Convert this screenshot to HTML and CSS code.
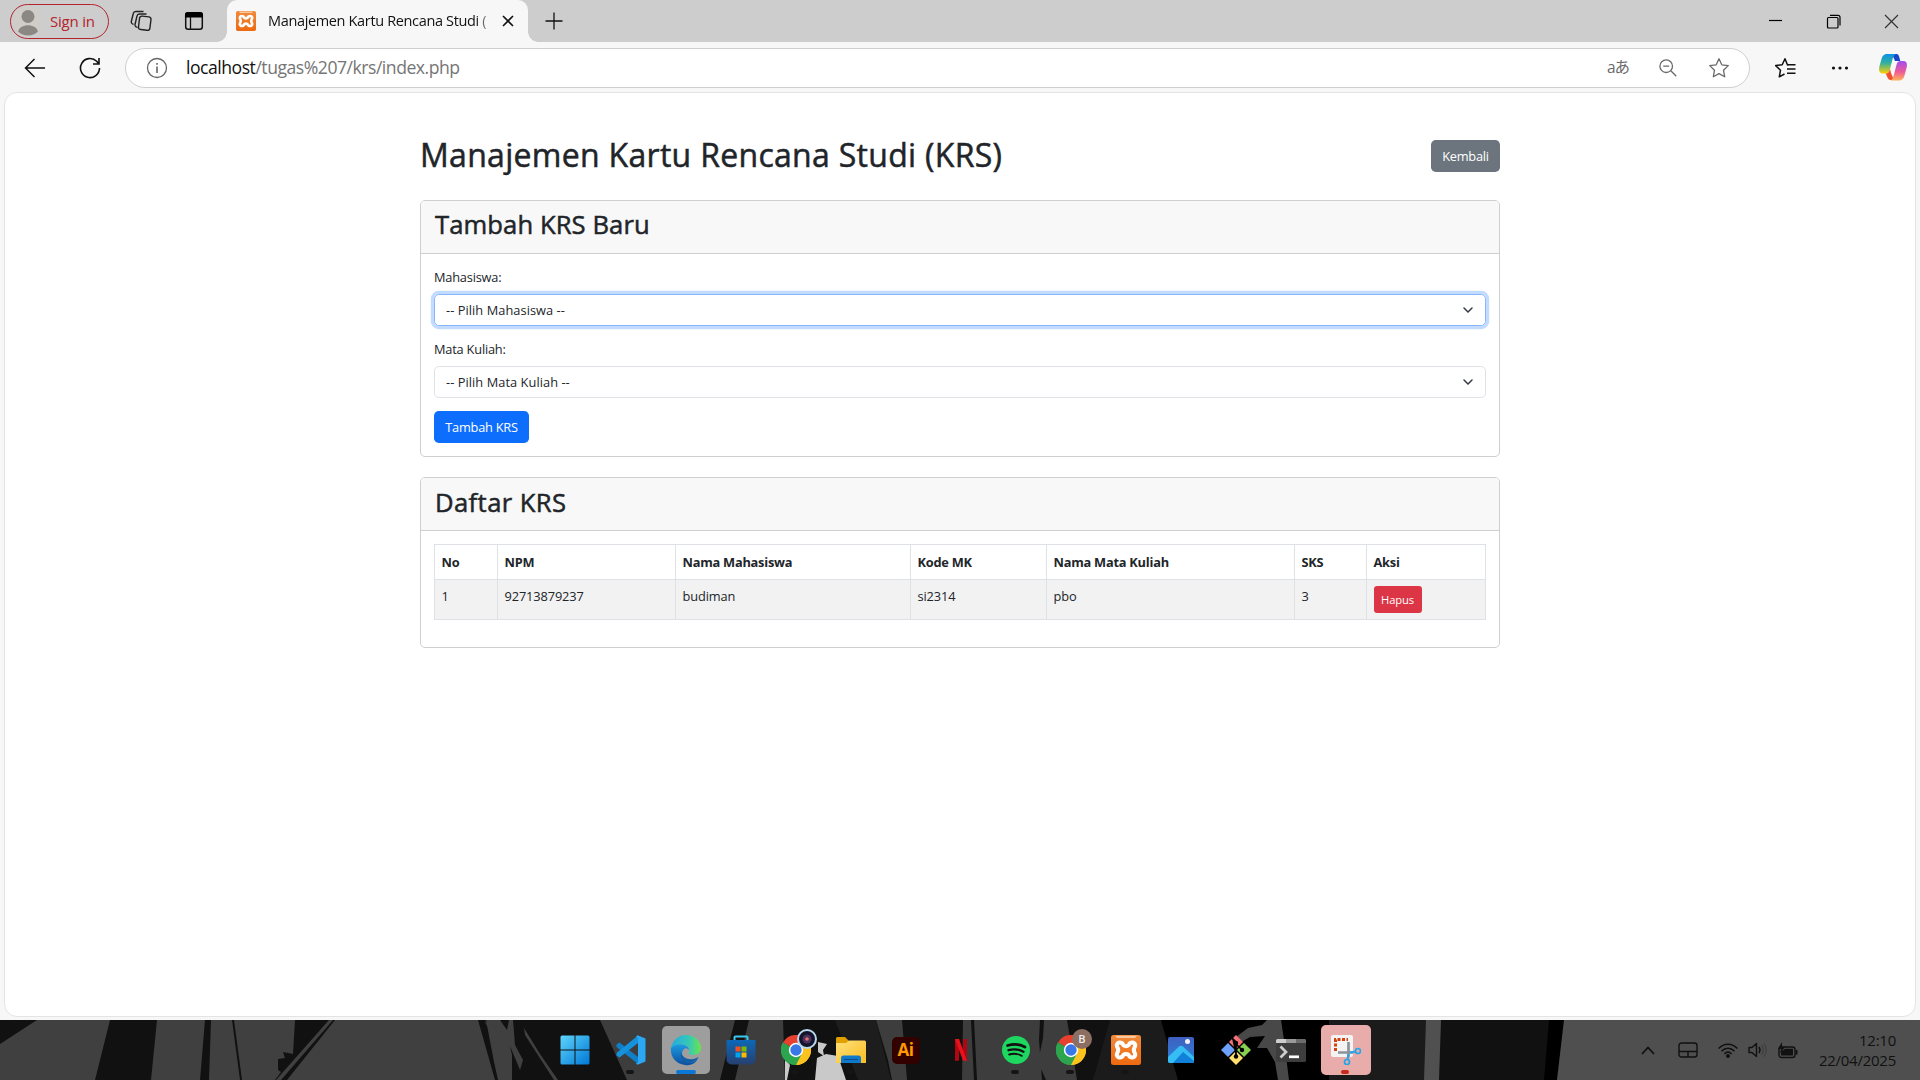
FILE: index.html
```html
<!DOCTYPE html>
<html lang="id">
<head>
<meta charset="utf-8">
<title>Manajemen Kartu Rencana Studi (KRS)</title>
<link rel="stylesheet" href="styles.css">
</head>
<body>
<svg width="0" height="0" class="defs">
  <defs>
    <linearGradient id="blue" x1="0" y1="0" x2="1" y2="1"><stop offset="0" stop-color="#5fd4fb"/><stop offset="1" stop-color="#0078d6"/></linearGradient>
    <linearGradient id="orange" x1="0" y1="0" x2="0" y2="1"><stop offset="0" stop-color="#f08a3c"/><stop offset="1" stop-color="#ee6a10"/></linearGradient>
    <linearGradient id="edgeA" x1="0" y1="0" x2="1" y2="0"><stop offset="0" stop-color="#27a9e1"/><stop offset=".6" stop-color="#35c9b5"/><stop offset="1" stop-color="#6be34c"/></linearGradient>
    <linearGradient id="edgeB" x1="0" y1="0" x2="0" y2="1"><stop offset="0" stop-color="#1c9be0"/><stop offset="1" stop-color="#0d4f9f"/></linearGradient>
    <linearGradient id="store" x1="0" y1="0" x2="0" y2="1"><stop offset="0" stop-color="#0c68b8"/><stop offset="1" stop-color="#27406f"/></linearGradient>
    <linearGradient id="folder" x1="0" y1="0" x2="1" y2="1"><stop offset="0" stop-color="#ffe07a"/><stop offset="1" stop-color="#fbbd22"/></linearGradient>
    <linearGradient id="photo" x1="0" y1="0" x2="0" y2="1"><stop offset="0" stop-color="#3f5fc0"/><stop offset="1" stop-color="#2a83d8"/></linearGradient>
    <linearGradient id="copA" x1="0" y1="0" x2="0" y2="1"><stop offset="0" stop-color="#0d8fe8"/><stop offset=".45" stop-color="#2fb0a0"/><stop offset="1" stop-color="#ffd000"/></linearGradient>
    <linearGradient id="copB" x1="0" y1="0" x2="0" y2="1"><stop offset="0" stop-color="#a04df0"/><stop offset=".55" stop-color="#ee5a98"/><stop offset="1" stop-color="#ffb259"/></linearGradient>
    <symbol id="chrome" viewBox="0 0 30 30">
      <path d="M15 15 2 7.500A15 15 0 0 1 28 7.500Z" fill="#e8402f"/>
      <path d="M15 15 28 7.500A15 15 0 0 1 15 30Z" fill="#fcc31e"/>
      <path d="M15 15V30A15 15 0 0 1 2 7.500Z" fill="#2da44e"/>
      <path d="M15 8H28.300A15 15 0 0 1 15 30L21 18.500Z" fill="#fcc31e"/>
      <path d="M15 30 21 18.500 9 18.500 2 7.500A15 15 0 0 0 15 30Z" fill="#2da44e"/>
      <circle cx="15" cy="15" r="7.200" fill="#fff"/><circle cx="15" cy="15" r="5.700" fill="#3b78e7"/>
    </symbol>
    <symbol id="xampp" viewBox="0 0 30 30">
      <rect width="30" height="30" rx="2.500" fill="url(#orange)"/>
      <path d="M4 .8H26L24 3H6Z" fill="#fbc79c"/>
      <path d="M11.500 8.500C7.500 6 4.500 9 6.500 12.500 7.500 14.200 7.500 15.800 6.500 17.500 4.500 21 7.500 24 11.500 21.500 12.500 18 17.500 18 18.500 21.500 22.500 24 25.500 21 23.500 17.500 22.500 15.800 22.500 14.200 23.500 12.500 25.500 9 22.500 6 18.500 8.500 17.500 12 12.500 12 11.500 8.500Z" fill="none" stroke="#fff" stroke-width="4" stroke-linejoin="round"/>
    </symbol>
  </defs>
</svg>

<header class="tabs">
  <div class="signin">
    <svg width="30" height="30" viewBox="0 0 30 30"><circle cx="15" cy="15" r="14.500" fill="#d0cdc8"/><circle cx="15" cy="10.500" r="6.500" fill="#8b8782"/><path d="M5 25.500C7 17 23 17 25 25.500A14.500 14.500 0 0 1 5 25.500Z" fill="#8b8782"/></svg>
    <span class="signin-text">Sign in</span>
  </div>
  <svg class="workspaces" width="22" height="22" viewBox="0 0 22 22" fill="none" stroke="#222" stroke-width="1.400"><rect x="9" y="6.500" width="11.500" height="13.500" rx="2.500" transform="rotate(7 15 13)"/><path d="M7.500 17.500 5.800 16.600A2 2 0 0 1 5 14.500L7 6A2.500 2.500 0 0 1 9.500 4H16.500"/><path d="M3.500 14.500 2 13.500A2 2 0 0 1 1.300 11.500L3.300 3.500A2.500 2.500 0 0 1 5.700 1.500H13.500"/></svg>
  <svg class="vtabs" width="20" height="20" viewBox="0 0 20 20"><rect x="1.700" y="1.700" width="16.600" height="16.600" rx="2.500" fill="none" stroke="#111" stroke-width="1.500"/><path d="M1 6.500V4A3 3 0 0 1 4 1H16A3 3 0 0 1 19 4V6.500Z" fill="#000"/><path d="M6.500 6V18" stroke="#111" stroke-width="1.300"/></svg>
  <div class="tab">
    <svg width="20" height="20"><use href="#xampp"/></svg>
    <span class="tab-title">Manajemen Kartu Rencana Studi (</span>
    <svg class="tab-close" width="12" height="12" viewBox="0 0 12 12" stroke="#111" stroke-width="1.600"><path d="M1 1 11 11M11 1 1 11"/></svg>
  </div>
  <svg class="plus" width="18" height="18" viewBox="0 0 18 18" stroke="#111" stroke-width="1.300"><path d="M9 .5V17.500M.5 9H17.500"/></svg>
  <div class="window-buttons">
    <svg width="15" height="15" viewBox="0 0 15 15" stroke="#000" stroke-width="1.200"><path d="M1 6.500H14"/></svg>
    <svg width="15" height="15" viewBox="0 0 15 15" fill="none" stroke="#000" stroke-width="1.200"><rect x="1.500" y="3.500" width="10.500" height="10.500" rx="1"/><path d="M4 1.300H12A2 2 0 0 1 14 3.300V11.500"/></svg>
    <svg width="15" height="15" viewBox="0 0 15 15" stroke="#333" stroke-width="1.200"><path d="M1 1 14 14M14 1 1 14"/></svg>
  </div>
</header>

<nav class="toolbar">
  <svg class="back" width="22" height="20" viewBox="0 0 22 20" fill="none" stroke="#111" stroke-width="1.500"><path d="M21 10H1.500M10.500 1 1.500 10 10.500 19"/></svg>
  <svg class="reload" width="22" height="22" viewBox="0 0 22 22" fill="none" stroke="#111" stroke-width="1.600"><path d="M20.500 11A9.500 9.500 0 1 1 17.700 4.300L19.500 6.500M20 1V7H14"/></svg>
  <div class="address">
    <svg width="22" height="22" viewBox="0 0 22 22" fill="none" stroke="#666" stroke-width="1.300"><circle cx="11" cy="11" r="9.500"/><path d="M11 9.500V16M11 6V7.700" stroke-width="1.600"/></svg>
    <span class="url"><b>localhost</b>/tugas%207/krs/index.php</span>
    <span class="translate">aあ</span>
    <svg class="zoom-icon" width="18" height="18" viewBox="0 0 18 18" fill="none" stroke="#6a6a6a" stroke-width="1.300"><circle cx="7.200" cy="7.200" r="6.300"/><path d="M4.200 7.200H10.200M11.800 11.800 17.300 17.300"/></svg>
    <svg class="star" width="22" height="22" viewBox="0 0 22 22" fill="none" stroke="#6a6a6a" stroke-width="1.300" stroke-linejoin="round"><path d="M11 1.800 13.800 7.800 20.300 8.600 15.500 13.200 16.700 19.800 11 16.600 5.300 19.800 6.500 13.200 1.700 8.600 8.200 7.800Z"/></svg>
  </div>
  <svg class="favorites" width="22" height="22" viewBox="0 0 22 22" fill="none" stroke="#111" stroke-width="1.500" stroke-linejoin="round"><path d="M14.500 8H13.500L11 1.800 8.200 7.800 1.700 8.600 6.500 13.200 5.300 19.800 10.500 17M14 7.800H21.500M13 12H21.500M13 16.200H21.500"/></svg>
  <svg class="dots" width="18" height="6" viewBox="0 0 18 6" fill="#111"><circle cx="2.500" cy="3" r="1.600"/><circle cx="9" cy="3" r="1.600"/><circle cx="15.500" cy="3" r="1.600"/></svg>
  <svg class="copilot" width="28" height="27" viewBox="0 0 28 27"><path d="M13 0H17.500C19.500 0 20 2 20.500 4L21.300 7H16Z" fill="#1846c8"/><path d="M8.500 0H17C14.500 1 13.800 4 12.800 8L11 15C10 18.500 9 19.500 6.500 19.500H4C0 19.500-.5 16 .5 12L2.500 5C3.500 1.500 5 0 8.500 0Z" fill="url(#copA)"/><path d="M6.500 19.500C9.500 19.500 10 18 11 15L12 19 15 26H11.500C8.500 26 8.500 22 6.500 19.500Z" fill="#f0502c"/><path d="M19.500 26.500H11.500C14 25.500 14.500 22 15.500 18.500L17.300 11.500C18 8.500 19 7 21.500 7H24C28 7 28.500 10 27.500 14L25.500 21.500C24.500 25 23 26.500 19.500 26.500Z" fill="url(#copB)"/></svg>
</nav>

<div class="viewport">
  <main class="container">
    <div class="heading">
      <h1>Manajemen Kartu Rencana Studi (KRS)</h1>
      <button class="btn btn-secondary">Kembali</button>
    </div>
    <section class="card form-card">
      <div class="card-header"><h2>Tambah KRS Baru</h2></div>
      <div class="card-body">
        <label>Mahasiswa:</label>
        <div class="select focused"><span>-- Pilih Mahasiswa --</span><svg width="10" height="7" viewBox="0 0 10 7" fill="none" stroke="#343a40" stroke-width="1.500" stroke-linecap="round"><path d="M1 1 5 5 9 1"/></svg></div>
        <label>Mata Kuliah:</label>
        <div class="select"><span>-- Pilih Mata Kuliah --</span><svg width="10" height="7" viewBox="0 0 10 7" fill="none" stroke="#343a40" stroke-width="1.500" stroke-linecap="round"><path d="M1 1 5 5 9 1"/></svg></div>
        <button class="btn btn-primary">Tambah KRS</button>
      </div>
    </section>
    <section class="card list-card">
      <div class="card-header"><h2>Daftar KRS</h2></div>
      <div class="card-body">
        <table>
          <colgroup><col class="c1"><col class="c2"><col class="c3"><col class="c4"><col class="c5"><col class="c6"><col class="c7"></colgroup>
          <thead><tr><th>No</th><th>NPM</th><th>Nama Mahasiswa</th><th>Kode MK</th><th>Nama Mata Kuliah</th><th>SKS</th><th>Aksi</th></tr></thead>
          <tbody><tr><td>1</td><td>92713879237</td><td>budiman</td><td>si2314</td><td>pbo</td><td>3</td><td><button class="btn btn-danger">Hapus</button></td></tr></tbody>
        </table>
      </div>
    </section>
  </main>
</div>

<footer class="taskbar">
  <svg class="wallpaper" width="1920" height="60" viewBox="0 0 1920 60">
    <rect width="1920" height="60" fill="#111"/>
    <g fill="#404040">
      <path d="M0 24 37 0H110L95 60H0ZM157 0H205L200 60H151ZM211 0H232L240 60H209ZM234 0H295L293 34 283 32 285 38 278 39V50L281 52 275 60H242ZM329 0H333L281 60H276ZM335 0H478L495 60H287ZM484 0 492 10 499 29 487 6ZM486 0H500L507 10 509 0H513L515 25 523 40 520 50 510 26 512 35V60H498L494 42ZM524 8 540 34 558 60H554L525 15Z"/>
      <path d="M600 0H735L720 60H627ZM749 0H783L785 60H735ZM876 0H902L907 60H892L888 40ZM963 0H971L974 60H962ZM974 0H1040L1039 20 1042 60H977ZM1044 0H1067L1072 30 1077 60H1046L1038 42 1043 18Z" fill="#3d3d3d"/>
      <path d="M835 0H876L891 60H858Z" fill="#1d1d1d"/>
      <path d="M1110 0H1161L1178 60H1093Z" fill="#1b1b1b"/>
    </g>
    <path d="M785 22 789 30 786 40 790 45 787 60H785ZM817 38 826 34 838 36 846 60H815ZM818 22 827 24 823 30 824 36 818 32Z" fill="#c9c9c9"/>
    <path d="M1161 0H1329V60H1178Z" fill="#000"/>
    <path d="M1267 0H1281L1284 20 1289 60H1278L1275 42 1267 28 1257 28 1265 16 1250 17 1238 24 1232 20 1248 8 1262 5Z" fill="#484848"/>
    <path d="M1329 0H1426V60H1329Z" fill="#1b1b1b"/>
    <path d="M1426 0H1441L1439 60H1424Z" fill="#505050"/>
    <path d="M1549 0H1564L1557 60H1544Z" fill="#000"/>
    <path d="M1564 0H1920V60H1557Z" fill="#4f4f4f"/>
  </svg>
  <div class="apps">
    <div class="app"><svg width="30" height="30" viewBox="0 0 30 30" fill="url(#blue)"><path d="M2 .5H14.500V14.500H.5V2A1.500 1.500 0 0 1 2 .5ZM15.500 .5H28A1.500 1.500 0 0 1 29.500 2V14.500H15.500ZM.5 15.500H14.500V29.500H2A1.500 1.500 0 0 1 .5 28ZM15.500 15.500H29.500V28A1.500 1.500 0 0 1 28 29.500H15.500Z"/></svg></div>
    <div class="app running"><svg width="30" height="30" viewBox="0 0 30 30"><path d="M22 22 3.500 7.500 .5 9.500V12L22 29Z" fill="#0f7fc9"/><path d="M22 8 3.500 22.500 .5 20.500V18L22 .5Z" fill="#1592dc"/><path d="M21.500 .2 29.500 3.500V26.500L21.500 29.800 20 28.500 22 27V3L20 1.500Z" fill="#2ba7f3"/></svg></div>
    <div class="app active"><svg width="32" height="32" viewBox="0 0 32 32"><path d="M1 14C3 5 9 1 16 1 25 1 31 7 31 14 31 19 27 21 23 21 20 21 18 20 19 18 22 11 10 7 1 16Z" fill="url(#edgeA)"/><path d="M1 14C7 8 19 10 19 16 13 10 9 22 15 27 19 31 24 28 28 25 25 30 20 32 15 31 6 30 0 23 1 14Z" fill="url(#edgeB)"/><path d="M11 18C9 25 15 31 22 28.500 26 27 28 25 28.500 23 20 28 12 24 11 18Z" fill="#145ea6"/></svg></div>
    <div class="app"><svg width="30" height="30" viewBox="0 0 30 30"><path d="M8.500 6V2.500A1 1 0 0 1 9.500 1.500H20.500A1 1 0 0 1 21.500 2.500V6" fill="none" stroke="#38c8f2" stroke-width="2"/><path d="M.5 5H29.500V24A5 5 0 0 1 24.500 29.500H5.500A5 5 0 0 1 .5 24Z" fill="url(#store)"/><path d="M9.500 11.500H14.500V16.500H9.500Z" fill="#f25022"/><path d="M15.500 11.500H20.500V16.500H15.500Z" fill="#7fba00"/><path d="M9.500 17.500H14.500V22.500H9.500Z" fill="#00a4ef"/><path d="M15.500 17.500H20.500V22.500H15.500Z" fill="#ffb900"/></svg></div>
    <div class="app running"><svg width="30" height="30"><use href="#chrome"/></svg><svg class="badge" width="20" height="20" viewBox="0 0 20 20"><circle cx="10" cy="10" r="9" fill="#15142a" stroke="#b8d8ee" stroke-width="2"/><circle cx="10" cy="10" r="4.500" fill="#49305f"/><circle cx="10" cy="10" r="1.800" fill="#e97062"/></svg></div>
    <div class="app running"><svg width="30" height="28" viewBox="0 0 30 28"><path d="M0 2.500A1.500 1.500 0 0 1 1.500 1H9L13 5H28V9H0Z" fill="#e0a000"/><path d="M0 7H10L13 4.500H28.500A1.500 1.500 0 0 1 30 6V27H0Z" fill="url(#folder)"/><path d="M5 27V22A2.500 2.500 0 0 1 7.500 19.500H22.500A2.500 2.500 0 0 1 25 22V27Z" fill="#1179cc"/><path d="M8 23.500H22" stroke="#0a4f93" stroke-width="1.200"/></svg></div>
    <div class="app"><span class="ai">Ai</span></div>
    <div class="app"><svg width="12" height="22" viewBox="0 0 12 22"><path d="M0 0H4V21.500L0 22ZM8 0H12V22L8 21.500Z" fill="#b1060f"/><path d="M0 0H4L12 22 8 21.500Z" fill="#e9121c"/></svg></div>
    <div class="app running"><svg width="28" height="28" viewBox="0 0 28 28"><circle cx="14" cy="14" r="14" fill="#1ed760"/><g fill="none" stroke="#121212" stroke-linecap="round"><path d="M5.500 9.500C11 7.800 18 8.300 23 11" stroke-width="2.700"/><path d="M6.500 14.200C11.500 12.800 17 13.300 21.500 15.700" stroke-width="2.300"/><path d="M7.200 18.500C11.500 17.300 16 17.700 19.800 19.800" stroke-width="1.900"/></g></svg></div>
    <div class="app running"><svg width="30" height="30"><use href="#chrome"/></svg><span class="badge letter">B</span></div>
    <div class="app running"><svg width="30" height="30"><use href="#xampp"/></svg></div>
    <div class="app"><svg width="26" height="26" viewBox="0 0 26 26"><rect width="26" height="26" rx="2" fill="url(#photo)"/><path d="M0 20 11 9.500Q13 8 15 9.500L26 20V24A2 2 0 0 1 24 26H2A2 2 0 0 1 0 24Z" fill="#35bdf4"/><path d="M5 26 15 15 26 24A2 2 0 0 1 24 26Z" fill="#1180d8"/><circle cx="19.500" cy="4.500" r="2.500" fill="#f2f2f5"/></svg></div>
    <div class="app"><svg width="30" height="30" viewBox="0 0 30 30"><path d="M15 0 22 7 15 14 8 7Z" fill="#f77077"/><path d="M23 8 30 15 23 22 16 15Z" fill="#8ad04f"/><path d="M7 8 14 15 7 22 0 15Z" fill="#6ea2fa"/><path d="M15 16 22 23 15 30 8 23Z" fill="#ffe06e"/><path d="M11 3 15 7V22M15 9 21 15" stroke="#000" stroke-width="1.700"/><circle cx="15" cy="21.500" r="2.200"/><circle cx="21" cy="15" r="2.200"/><circle cx="15" cy="8" r="2.200"/></svg></div>
    <div class="app"><svg width="30" height="23" viewBox="0 0 30 23"><rect width="30" height="23" rx="1.500" fill="#3d3d3d"/><path d="M0 4V1.500A1.500 1.500 0 0 1 1.500 0H10V4Z" fill="#ccc"/><path d="M10 0H20V4H10Z" fill="#999"/><path d="M20 0H28.500A1.500 1.500 0 0 1 30 1.500V4H20Z" fill="#6c6c6c"/><path d="M4.500 7.500 10 13 4.500 18.500" fill="none" stroke="#ccc" stroke-width="2.700"/><path d="M13 17.800H23" stroke="#fff" stroke-width="2.700"/></svg></div>
    <div class="app snip"><svg width="30" height="30" viewBox="0 0 30 30"><rect width="22" height="22" rx="2" fill="#f3f3f3"/><path d="M4.500 16V4.500H17" fill="none" stroke="#d2430f" stroke-width="3" stroke-dasharray="3 1.500"/><path d="M17.500 7V22M7 17.500H22" stroke="#8b9299" stroke-width="2.700" fill="none"/><circle cx="16" cy="27" r="2.500" fill="none" stroke="#24a4ea" stroke-width="1.700"/><circle cx="27" cy="16" r="2.500" fill="none" stroke="#24a4ea" stroke-width="1.700"/><path d="M16.500 24.500 17.500 19M19 17.500 24.500 16.500" stroke="#24a4ea" stroke-width="2"/></svg></div>
  </div>
  <div class="tray">
    <svg width="14" height="9" viewBox="0 0 14 9" fill="none" stroke="#111" stroke-width="1.800"><path d="M1 8 7 1.500 13 8"/></svg>
    <svg class="pad" width="20" height="16" viewBox="0 0 20 16" fill="none" stroke="#111" stroke-width="1.400"><rect x="1" y="1" width="18" height="14" rx="2.500"/><path d="M1 9.500H19M10 9.500V15"/></svg>
    <svg class="wifi" width="20" height="15" viewBox="0 0 20 15" fill="none" stroke="#111" stroke-width="1.500"><path d="M.7 5.500C6-.3 14-.3 19.300 5.500M3.500 8.300C7.300 4.300 12.700 4.300 16.500 8.300M6.300 11C8.500 8.800 11.500 8.800 13.700 11"/><circle cx="10" cy="13" r="1.200" fill="#111"/></svg>
    <svg class="speaker" width="20" height="16" viewBox="0 0 20 16" fill="none" stroke="#111" stroke-width="1.400"><path d="M1 5.500H4L8.500 1.500V14.500L4 10.500H1Z" stroke-linejoin="round"/><path d="M11 5Q13 8 11 11"/><path d="M13.500 3Q17 8 13.500 13M16 1.500Q20.500 8 16 14.500" stroke="#333" stroke-width=".8"/></svg>
    <svg class="battery" width="20" height="17" viewBox="0 0 20 17"><rect x="1" y="5" width="16" height="10.500" rx="2.500" fill="none" stroke="#111" stroke-width="1.400"/><path d="M3 13.500V10L7 6.800H15V13.500ZM17.500 8H19.500V12.500H17.500ZM4 0 0 7H3L2 11.500 7 5H4Z" fill="#111"/></svg>
    <div class="clock"><span class="time">12:10</span><span class="date">22/04/2025</span></div>
  </div>
</footer>
</body>
</html>
```
FILE: styles.css
```css
* { box-sizing: border-box; }
body {
  margin: 0; width: 1920px; height: 1080px; overflow: hidden;
  display: flex; flex-direction: column;
  background: #f7f7f7; color: #212529;
  font-family: "Open Sans", "Noto Sans", "Noto Sans CJK JP", sans-serif;
  font-size: 12.8px;
}
svg { display: block; flex: none; }
.defs { position: absolute; }

/* Browser chrome */
.tabs { height: 42px; flex: none; display: flex; align-items: center; background: #cdcdcd; color: #111; }
.signin { width: 99px; height: 35px; margin-left: 10px; padding-left: 2px; display: flex; align-items: center; gap: 7px; border: 1.5px solid #b3242b; border-radius: 18px; color: #b3242b; }
.signin-text { font-size: 15px; letter-spacing: -0.2px; white-space: nowrap; padding-bottom: 1px; }
.workspaces { margin-left: 21px; }
.vtabs { margin-left: 32px; }
.tab { position: relative; align-self: stretch; width: 301px; margin-left: 23px; padding-left: 9px; display: flex; align-items: center; background: #f7f7f7; border-radius: 10px 10px 0 0; }
.tab::before, .tab::after { content: ""; position: absolute; bottom: 0; width: 10px; height: 10px; }
.tab::before { left: -10px; background: radial-gradient(circle at 0 0, #cdcdcd 9.5px, #f7f7f7 10px); }
.tab::after { right: -10px; background: radial-gradient(circle at 100% 0, #cdcdcd 9.5px, #f7f7f7 10px); }
.tab-title { width: 226px; margin-left: 12px; padding-bottom: 1px; white-space: nowrap; font-size: 14.5px; letter-spacing: -0.35px; -webkit-mask-image: linear-gradient(90deg, #000 208px, transparent 228px); mask-image: linear-gradient(90deg, #000 208px, transparent 228px); }
.tab-close { margin-left: 8px; }
.plus { margin-left: 17px; }
.window-buttons { margin-left: auto; padding-right: 21px; display: flex; gap: 43px; }

.toolbar { height: 50px; padding-top: 1px; flex: none; display: flex; align-items: center; }
.back { margin-left: 24px; }
.reload { margin-left: 33px; }
.address { width: 1625px; height: 40px; margin-left: 24px; padding: 0 19px 0 20px; display: flex; align-items: center; background: #fff; border: 1px solid #cfcfcf; border-radius: 20px; }
.url { margin-left: 18px; padding-bottom: 1px; font-size: 17.6px; letter-spacing: -0.48px; color: #757575; }
.url b { font-weight: 400; color: #111; }
.translate { margin-left: auto; padding-bottom: 3px; font-size: 15.5px; letter-spacing: -1px; color: #6a6a6a; font-family: "Open Sans", "Noto Sans CJK JP", sans-serif; }
.zoom-icon { margin-left: 30px; }
.star { margin-left: 31px; }
.favorites { margin-left: 24px; }
.dots { margin-left: 35px; }
.copilot { margin-left: 30px; }

/* Page */
.viewport { width: 1912px; height: 925px; margin: 0 4px; flex: none; padding: 39px 415px 0; background: #fff; border: 1px solid #e4e4e4; border-radius: 13px; }
.container { width: 1080px; }
.heading { height: 68px; padding-top: 8px; display: flex; align-items: flex-start; justify-content: space-between; }
h1, h2 { margin: 0; font-weight: 500; line-height: 1.2; white-space: nowrap; -webkit-text-stroke: 0.5px #212529; }
h1 { font-size: 32px; letter-spacing: 0.3px; margin-top: -4px; }
h2 { font-size: 25.6px; letter-spacing: 0.1px; padding: 1px 0 0 1px; }
.btn { height: 32px; padding: 0 10px; border: 0; border-radius: 4.8px; color: #fff; font-family: inherit; font-size: 12.8px; letter-spacing: -0.25px; white-space: nowrap; }
.btn-secondary { width: 69px; background: #6c757d; }
.btn-primary { width: 95px; background: #0d6efd; }
.btn-danger { width: 48px; height: 27px; padding: 0; display: block; border-radius: 3.2px; background: #dc3545; font-size: 11.2px; letter-spacing: -0.1px; }
.card { border: 1px solid #cfcfcf; border-radius: 5px; background: #fff; overflow: hidden; }
.form-card { height: 257px; }
.list-card { height: 171px; margin-top: 20px; }
.card-header { height: 53px; padding: 8px 13px; background: #f8f8f8; border-bottom: 1px solid #cfcfcf; }
.list-card h2 { padding-top: 2px; letter-spacing: 0.4px; }
.card-body { padding: 13px; display: flex; flex-direction: column; align-items: stretch; }
label { height: 21px; line-height: 21px; margin-bottom: 6px; letter-spacing: -0.2px; }
.select { height: 32px; margin-bottom: 13px; padding: 0 12px 0 11px; display: flex; align-items: center; justify-content: space-between; border: 1px solid #dee2e6; border-radius: 4.8px; letter-spacing: 0.06px; }
.select.focused { border-color: #86b7fe; box-shadow: 0 0 0 3.2px rgba(13, 110, 253, .25); }
.card-body .btn-primary { align-self: flex-start; }
table { width: 1052px; table-layout: fixed; border-collapse: collapse; }
.c1 { width: 63px; } .c2 { width: 178px; } .c3 { width: 235px; } .c4 { width: 136px; } .c5 { width: 248px; } .c6 { width: 72px; } .c7 { width: 119px; }
th, td { padding: 6px 7px 6px 6.5px; border: 1px solid #dee2e6; text-align: left; vertical-align: top; line-height: 20px; }
th { height: 35px; padding-top: 7px; font-weight: 700; letter-spacing: -0.23px; }
td { height: 40px; background: #f2f2f2; letter-spacing: -0.12px; }

/* Taskbar */
.taskbar { position: relative; height: 60px; margin-top: 3px; flex: none; display: flex; align-items: center; color: #111; }
.wallpaper { position: absolute; inset: 0; }
.apps { position: relative; display: flex; margin-left: 547px; }
.app { position: relative; width: 55px; height: 60px; display: grid; place-items: center; }
.running::after, .active::after, .snip::after { content: ""; position: absolute; left: 24px; bottom: 6px; width: 8px; height: 4px; border-radius: 2px; background: #151515; }
.app > svg, .ai { position: relative; }
.app:not(:first-child) > svg:first-child { left: 1px; }
.active::before, .snip::before { content: ""; position: absolute; left: 5px; top: 6px; width: 48px; height: 48px; border-radius: 5px; background: #9e9e9e; }
.active::after { left: 19px; bottom: 6px; width: 20px; background: #0a78d4; }
.snip::before { left: 4px; top: 5px; width: 50px; height: 50px; background: #e8adab; }
.snip::after { background: #c42b1c; }
.app > .badge { position: absolute; right: 5px; top: 9px; }
.letter { width: 20px; height: 20px; border-radius: 50%; background: #8d6e63; color: #eee; font-size: 11px; font-weight: 600; line-height: 20px; text-align: center; }
.ai { left: 1px; width: 28px; height: 27px; border-radius: 5px; background: #330000; color: #ff9a00; font-size: 17px; font-weight: 700; line-height: 25px; letter-spacing: -0.5px; text-align: center; }
.tray { position: relative; margin-left: auto; padding-right: 24px; display: flex; align-items: center; }
.pad { margin-left: 23px; }
.wifi { margin-left: 20px; }
.speaker { margin-left: 10px; }
.battery { margin-left: 10px; }
.clock { width: 98px; display: flex; flex-direction: column; align-items: flex-end; font-size: 15px; line-height: 20px; letter-spacing: -0.25px; }
```
